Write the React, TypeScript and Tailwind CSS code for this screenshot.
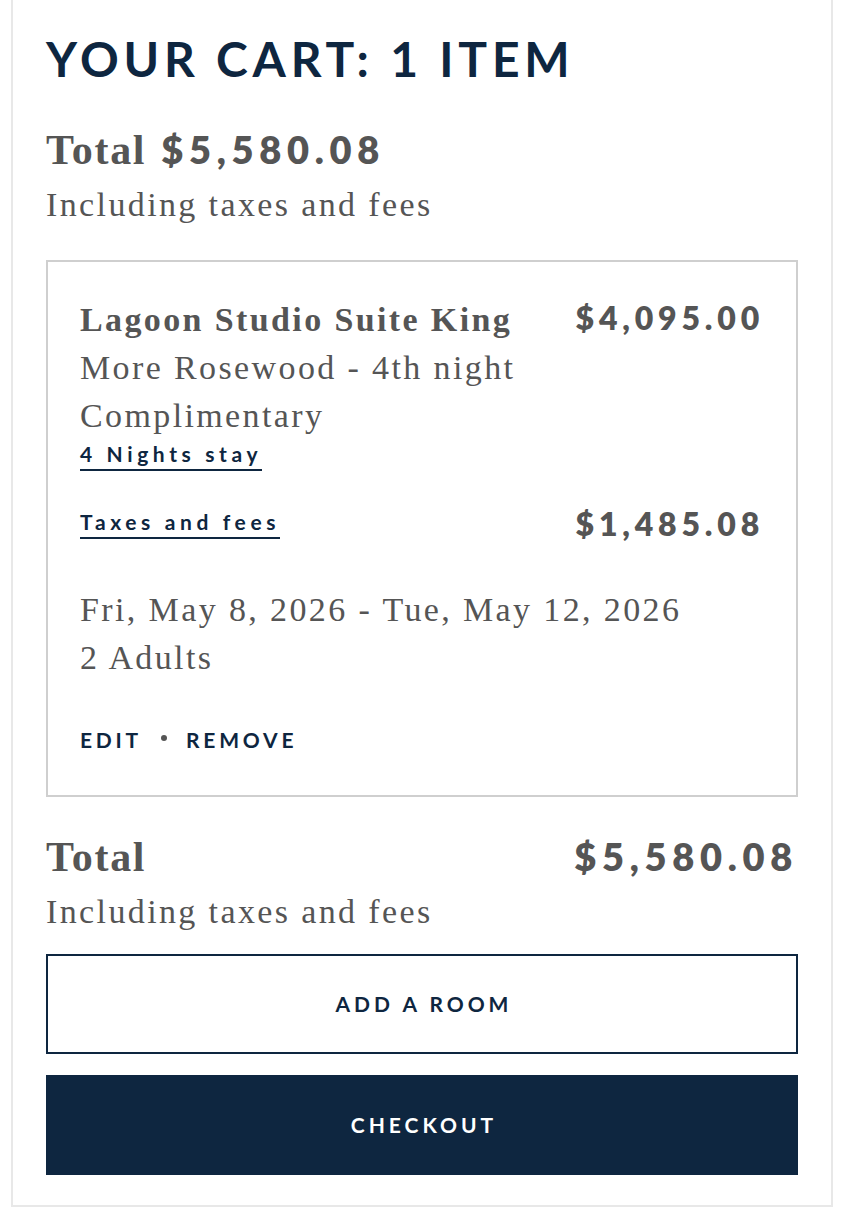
import React from "react";

const serif = "font-['Liberation_Serif','Times_New_Roman',serif]";
const sans = "font-['Lato','Inter',sans-serif]";

function LinkText({ children }: { children: React.ReactNode }) {
  return (
    <span
      className={`${sans} inline-block border-b-2 border-[#0e2640] pb-[3px] text-[21px] font-bold leading-[24px] tracking-[0.22em] text-[#0e2640]`}
    >
      {children}
    </span>
  );
}

function Price({ children, big }: { children: React.ReactNode; big?: boolean }) {
  return (
    <span
      className={`${sans} font-extrabold tracking-[0.15em] ${
        big ? "text-[38px] leading-[48px]" : "text-[32px] leading-[44px]"
      }`}
    >
      {children}
    </span>
  );
}

export default function App() {
  return (
    <div className="min-h-screen bg-white px-[11px]">
      <div className="border-x-2 border-b-2 border-[#e8e8e8] px-[33px] pt-[30px] pb-[30px]">
        <h1
          className={`${sans} text-[48px] font-bold leading-[58px] tracking-[0.1em] text-[#0e2640]`}
        >
          YOUR CART: 1 ITEM
        </h1>

        {/* Total en haut */}
        <div className="mt-[37px] text-[#555555]">
          <div className="flex items-baseline gap-[15px]">
            <span className={`${serif} text-[42px] font-bold leading-[48px] tracking-[0.04em]`}>
              Total
            </span>
            <Price big>$5,580.08</Price>
          </div>
          <p className={`${serif} mt-[11px] text-[34px] leading-[40px] tracking-[0.07em]`}>
            Including taxes and fees
          </p>
        </div>

        {/* Carte de la chambre */}
        <div className="mt-[35px] border-2 border-[#cfcfcf] px-[32px] pt-[34px] pb-[43px] text-[#555555]">
          <div className="flex items-start justify-between gap-4">
            <div>
              <p className={`${serif} text-[34px] font-bold leading-[48px] tracking-[0.07em]`}>
                Lagoon Studio Suite King
              </p>
              <p className={`${serif} text-[34px] leading-[48px] tracking-[0.07em]`}>
                More Rosewood - 4th night
              </p>
              <p className={`${serif} text-[34px] leading-[48px] tracking-[0.07em]`}>
                Complimentary
              </p>
            </div>
            <Price>$4,095.00</Price>
          </div>
          <div className="mt-[2px]">
            <LinkText>4 Nights stay</LinkText>
          </div>

          <div className="mt-[31px] flex items-center justify-between">
            <LinkText>Taxes and fees</LinkText>
            <Price>$1,485.08</Price>
          </div>

          <div className="mt-[40px]">
            <p className={`${serif} text-[34px] leading-[48px] tracking-[0.07em]`}>
              Fri, May 8, 2026 - Tue, May 12, 2026
            </p>
            <p className={`${serif} text-[34px] leading-[48px] tracking-[0.07em]`}>2 Adults</p>
          </div>

          <div
            className={`${sans} mt-[46px] flex items-center gap-[19px] text-[21px] font-bold leading-[24px] tracking-[0.18em] text-[#0e2640]`}
          >
            <span>EDIT</span>
            <span className="mb-[4px] inline-block h-[6px] w-[6px] rounded-full bg-[#555555]" />
            <span>REMOVE</span>
          </div>
        </div>

        {/* Total en bas */}
        <div className="mt-[35px] text-[#555555]">
          <div className="flex items-baseline justify-between">
            <span className={`${serif} text-[42px] font-bold leading-[48px] tracking-[0.04em]`}>
              Total
            </span>
            <Price big>$5,580.08</Price>
          </div>
          <p className={`${serif} mt-[11px] text-[34px] leading-[40px] tracking-[0.07em]`}>
            Including taxes and fees
          </p>
        </div>

        <div className="mt-[22px] flex flex-col gap-[21px]">
          <button
            className={`${sans} h-[100px] w-full border-2 border-[#0e2640] bg-white pl-[0.19em] text-[21px] font-bold tracking-[0.19em] text-[#0e2640]`}
          >
            ADD A ROOM
          </button>
          <button
            className={`${sans} h-[100px] w-full bg-[#0e2640] pl-[0.19em] text-[21px] font-bold tracking-[0.19em] text-white`}
          >
            CHECKOUT
          </button>
        </div>
      </div>
    </div>
  );
}
